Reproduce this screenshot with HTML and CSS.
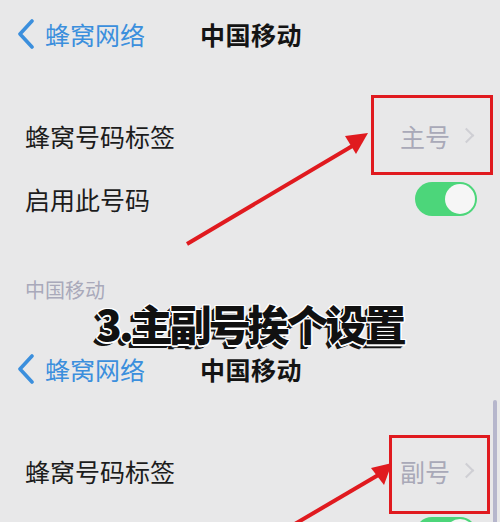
FILE: index.html
```html
<!DOCTYPE html>
<html lang="zh-CN">
<head>
<meta charset="utf-8">
<title>蜂窝号码标签</title>
<link rel="stylesheet" href="styles.css">
</head>
<body>
<div class="page">
    <section class="screen">
        <header class="nav">
            <a class="nav-back">
                <svg class="chevron-back" width="18" height="30" viewBox="0 0 18 30"><polyline points="15,2 3,15 15,28" /></svg>
                <span>蜂窝网络</span>
            </a>
            <h1 class="nav-title">中国移动</h1>
        </header>
        <ul class="list">
            <li class="row">
                <span class="row-label">蜂窝号码标签</span>
                <span class="row-value">主号<i class="chevron"></i></span>
            </li>
            <li class="row">
                <span class="row-label">启用此号码</span>
                <span class="switch on"><span class="knob"></span></span>
            </li>
        </ul>
        <div class="group-caption">中国移动</div>
    </section>

    <h2 class="step-title">3.主副号挨个设置</h2>

    <section class="screen">
        <header class="nav nav-second">
            <a class="nav-back">
                <svg class="chevron-back" width="18" height="30" viewBox="0 0 18 30"><polyline points="15,2 3,15 15,28" /></svg>
                <span>蜂窝网络</span>
            </a>
            <h1 class="nav-title">中国移动</h1>
        </header>
        <ul class="list">
            <li class="row">
                <span class="row-label">蜂窝号码标签</span>
                <span class="row-value">副号<i class="chevron"></i></span>
            </li>
            <li class="row">
                <span class="row-label">启用此号码</span>
                <span class="switch on"><span class="knob"></span></span>
            </li>
        </ul>
    </section>

    <!-- annotations drawn over the screens -->
    <div class="mark-box mark-box-1"></div>
    <div class="mark-box mark-box-2"></div>
    <svg class="arrows" width="500" height="522" viewBox="0 0 500 522">
        <line x1="187" y1="244" x2="354" y2="145" />
        <polygon points="345,136 368,133 356,154" />
        <line x1="288" y1="528" x2="380" y2="474" />
        <polygon points="371,468 392,463 384,485" />
    </svg>
    <div class="scroll-indicator"></div>
</div>
</body>
</html>
```

FILE: styles.css
```css
html, body {
    margin: 0;
    padding: 0;
}
body {
    background: #e8e8e9;
    font-family: "Noto Sans CJK SC", "Noto Sans", sans-serif;
    overflow: hidden;
}
.page {
    position: relative;
    width: 500px;
    height: 522px;
    overflow: hidden;
}
.screen {
    display: flex;
    flex-direction: column;
}
.nav {
    display: flex;
    align-items: center;
    height: 48px;
    margin-top: 10px;
    padding-left: 17px;
}
.nav-second {
    margin-top: 0;
}
.nav-back {
    display: flex;
    align-items: center;
    gap: 10px;
    color: #3b8fdd;
    font-size: 25px;
    width: 183px;
}
.chevron-back polyline {
    fill: none;
    stroke: #3b8fdd;
    stroke-width: 3.6;
    stroke-linecap: round;
    stroke-linejoin: round;
}
.nav-title {
    margin: 0;
    font-size: 25px;
    font-weight: 700;
    color: #141414;
    letter-spacing: 0.5px;
}
.list {
    list-style: none;
    margin: 46px 0 0;
    padding: 0;
}
.row {
    display: flex;
    align-items: center;
    justify-content: space-between;
    height: 63px;
    padding: 0 23px 0 25px;
}
.row-label {
    font-size: 25px;
    color: #1c1c1c;
}
.row-value {
    display: flex;
    align-items: center;
    gap: 11px;
    font-size: 25px;
    color: #a9a9b8;
    margin-right: 3px;
}
.chevron {
    width: 9px;
    height: 9px;
    border-top: 2px solid #cfcfd4;
    border-right: 2px solid #cfcfd4;
    transform: rotate(45deg);
    margin-right: 2px;
}
.switch {
    display: flex;
    align-items: center;
    box-sizing: border-box;
    width: 62px;
    height: 34px;
    border-radius: 17px;
    padding: 2px;
    background: #e0e0e0;
}
.switch.on {
    background: #4cd67a;
    justify-content: flex-end;
}
.knob {
    width: 30px;
    height: 30px;
    border-radius: 50%;
    background: #f6f6f6;
}
.group-caption {
    margin-top: 49px;
    padding-left: 25px;
    font-size: 20px;
    line-height: 22px;
    color: #a9a9ba;
}
.step-title {
    margin: 0;
    height: 44px;
    line-height: 44px;
    text-align: center;
    font-size: 42px;
    font-weight: 900;
    letter-spacing: -3px;
    color: #111;
    text-shadow:
        1.5px 0 0 #fff, -1.5px 0 0 #fff, 0 1.5px 0 #fff, 0 -1.5px 0 #fff,
        1px 1px 0 #fff, -1px -1px 0 #fff, 1px -1px 0 #fff, -1px 1px 0 #fff,
        -2px 2px 0 #151515, -3px 3px 0 #151515, -4px 4px 0 #151515;
}
.mark-box {
    position: absolute;
    border: 3px solid #e01a1f;
    box-sizing: border-box;
}
.mark-box-1 {
    left: 371px;
    top: 95px;
    width: 122px;
    height: 80px;
}
.mark-box-2 {
    left: 389px;
    top: 435px;
    width: 101px;
    height: 79px;
}
.arrows {
    position: absolute;
    left: 0;
    top: 0;
}
.arrows line {
    stroke: #e01a1f;
    stroke-width: 4;
}
.arrows polygon {
    fill: #e01a1f;
}
.scroll-indicator {
    position: absolute;
    left: 493px;
    top: 400px;
    width: 4px;
    height: 130px;
    border-radius: 2px;
    background: #b6b6cc;
}
```
